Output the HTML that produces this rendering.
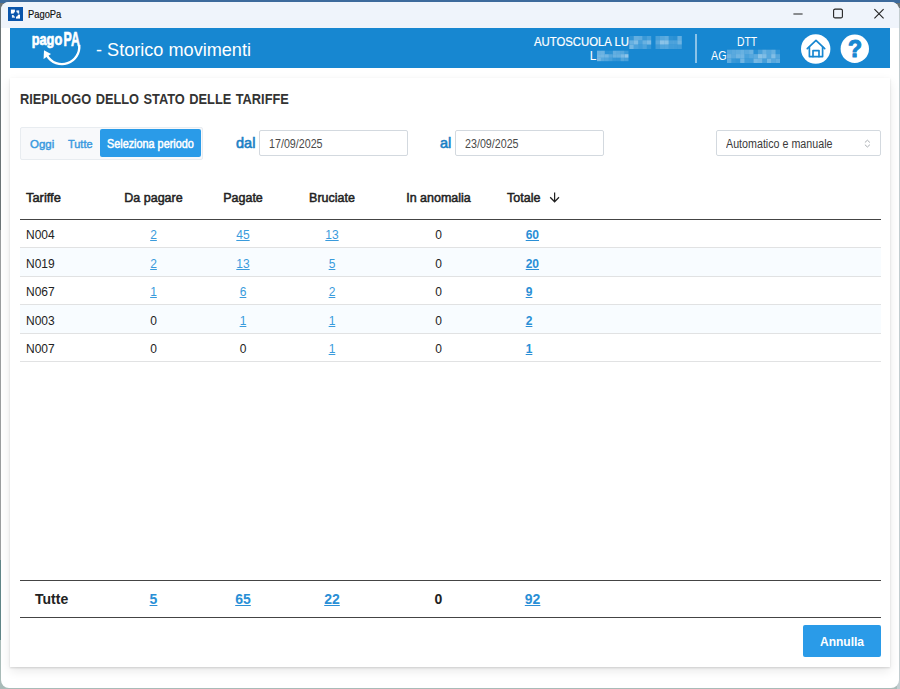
<!DOCTYPE html>
<html lang="it">
<head>
<meta charset="utf-8">
<title>PagoPa</title>
<style>
*{box-sizing:border-box;margin:0;padding:0}
html,body{width:900px;height:689px;overflow:hidden}
body{background:linear-gradient(180deg,#3c6a9c 0,#3c6a9c 3px,#6b7476 3px,#6b7476 230px,#9a9d9e 230px,#9a9d9e 560px,#5f8587 560px,#5f8587 640px,#a9bbb8 640px);font-family:"Liberation Sans",sans-serif;position:relative;color:#222}
.win{position:absolute;left:1px;top:1.5px;width:897.6px;height:686px;background:#fff;border-radius:8px;overflow:hidden}
.in{position:absolute;left:-1px;top:-1.5px;width:900px;height:689px}
.tbar{position:absolute;left:0;top:0;width:900px;height:28px;background:#eff4fb}
.abs{position:absolute;white-space:nowrap;transform-origin:0 50%}
.hdr{position:absolute;left:10px;top:28px;width:880px;height:40px;background:#1787d1;color:#fff}
.card{position:absolute;left:10px;top:78.3px;width:880px;height:588.4px;background:#fff;box-shadow:0 1px 2px rgba(0,0,0,.14),0 4px 10px rgba(0,0,0,.09)}
a{color:#3a9bdc;text-decoration:underline}
.h1{left:20px;top:91px;font-size:14px;font-weight:bold;color:#333;word-spacing:1px;transform:scaleX(.915)}
.tabs{left:20px;top:126.5px;width:183px;height:33px;border:1px solid #e8ecf0;border-radius:2px;background:#f8f9fb}
.tab{font-size:11.5px;color:#3a9ae0;top:137.5px;-webkit-text-stroke:.45px #3a9ae0}
.tabact{left:100px;top:129px;width:101px;height:28px;background:#2a9be8;border-radius:2px}
.lbl{font-size:14.5px;color:#1b7fc4;top:134.5px;-webkit-text-stroke:.6px #1b7fc4}
.inp{top:130px;height:26px;width:149px;border:1px solid #d3d9df;border-radius:2px;background:#fff;font-size:12px;color:#4a4a4a;padding:6px 0 0 9.2px}
.inp span,.sel span{display:inline-block;transform-origin:0 50%;transform:scaleX(.892)}
.sel{left:716px;top:130px;width:164.5px;height:26px;border:1px solid #d3d9df;border-radius:2px;background:#fff;font-size:12px;color:#3a3a3a;padding:6px 0 0 9px}
.th{font-size:12.5px;color:#222;top:190.5px;-webkit-text-stroke:.5px #222}
.c{transform:translateX(-50%)}
.hline{left:20px;width:861px;height:1px;background:#444}
.row{left:20px;width:861px;height:29px;border-bottom:1px solid #e1e2e3}
.row.alt{background:#f8fcff}
.td{font-size:12px;color:#222}
.tf{font-size:14px;font-weight:bold;color:#222;top:591px}
.tf a,.b a{font-weight:bold;color:#2a8fd6}
.btn{left:803px;top:625px;width:78px;height:32px;background:#2a9be8;border-radius:2px;color:#fff;font-size:12px;font-weight:bold;text-align:center;padding-top:10px}
</style>
</head>
<body>
<div style="position:absolute;left:897px;top:8px;width:3px;height:681px;background:#c3cdd0"></div>
<div class="win"><div class="in">
  <div class="tbar">
    <svg class="abs" style="left:8px;top:6.5px;width:15px;height:14.5px" viewBox="0 0 15 14.5"><rect width="15" height="14.5" fill="#0a55ab"/><rect x="2.9" y="2.6" width="4" height="4" fill="#fff"/><rect x="8.4" y="3.4" width="2.8" height="3.2" fill="#e8f2fb"/><rect x="3.9" y="8" width="3" height="2.7" fill="#e8f2fb"/><rect x="8" y="7.6" width="4" height="4" fill="#fff"/><circle cx="7.7" cy="7.4" r="2.3" fill="#0a55ab"/></svg>
    <div class="abs" id="t_win" style="left:27.8px;top:8px;font-size:11px;color:#111;-webkit-text-stroke:.2px #111;transform:scaleX(.85)">PagoPa</div>
    <svg class="abs" style="left:780px;top:0;width:120px;height:28px" viewBox="0 0 120 28"><g stroke="#222" stroke-width="1.1" fill="none"><path d="M13.4 14h9.2"/><rect x="53.6" y="9.1" width="8.8" height="8.8" rx="1.5"/><path d="M94.4 9.2l9.2 9.2M103.6 9.2l-9.2 9.2"/></g></svg>
  </div>
  <div class="hdr"></div>
  <div class="abs" id="t_title" style="left:95.7px;top:39.5px;font-size:17.5px;color:#fff;transform:scaleX(1.035)">- Storico movimenti</div>
  <div class="abs" id="t_a1" style="left:533.7px;top:35px;font-size:12px;color:#fff;-webkit-text-stroke:.2px #fff;transform:scaleX(.945)">AUTOSCUOLA LU</div>
  <div class="abs" id="t_a2" style="left:589.7px;top:49px;font-size:12px;color:#fff">L</div>
  <div class="abs" style="left:695.2px;top:33.6px;width:1.6px;height:29.3px;background:rgba(255,255,255,.5)"></div>
  <div class="abs" id="t_d1" style="left:736.5px;top:35px;font-size:12px;color:#fff;transform:scaleX(.86)">DTT</div>
  <div class="abs" id="t_d2" style="left:711px;top:49px;font-size:12px;color:#fff;transform:scaleX(.9)">AG</div>

  <svg class="abs" style="left:0;top:28px;width:900px;height:40px" viewBox="0 28 900 40"><rect x="629.3" y="36.0" width="4.4" height="4.3" fill="#fff" fill-opacity="0.11"/><rect x="633.7" y="36.0" width="4.4" height="4.3" fill="#fff" fill-opacity="0.33"/><rect x="638.0" y="36.0" width="4.4" height="4.3" fill="#fff" fill-opacity="0.30"/><rect x="642.4" y="36.0" width="4.4" height="4.3" fill="#fff" fill-opacity="0.15"/><rect x="646.8" y="36.0" width="4.4" height="4.3" fill="#fff" fill-opacity="0.22"/><rect x="655.5" y="36.0" width="4.4" height="4.3" fill="#fff" fill-opacity="0.21"/><rect x="659.9" y="36.0" width="4.4" height="4.3" fill="#fff" fill-opacity="0.27"/><rect x="664.3" y="36.0" width="4.4" height="4.3" fill="#fff" fill-opacity="0.31"/><rect x="668.7" y="36.0" width="4.4" height="4.3" fill="#fff" fill-opacity="0.10"/><rect x="673.0" y="36.0" width="4.4" height="4.3" fill="#fff" fill-opacity="0.08"/><rect x="677.4" y="36.0" width="4.4" height="4.3" fill="#fff" fill-opacity="0.32"/><rect x="629.3" y="40.3" width="4.4" height="4.3" fill="#fff" fill-opacity="0.35"/><rect x="633.7" y="40.3" width="4.4" height="4.3" fill="#fff" fill-opacity="0.45"/><rect x="638.0" y="40.3" width="4.4" height="4.3" fill="#fff" fill-opacity="0.22"/><rect x="642.4" y="40.3" width="4.4" height="4.3" fill="#fff" fill-opacity="0.35"/><rect x="646.8" y="40.3" width="4.4" height="4.3" fill="#fff" fill-opacity="0.43"/><rect x="655.5" y="40.3" width="4.4" height="4.3" fill="#fff" fill-opacity="0.29"/><rect x="659.9" y="40.3" width="4.4" height="4.3" fill="#fff" fill-opacity="0.50"/><rect x="664.3" y="40.3" width="4.4" height="4.3" fill="#fff" fill-opacity="0.49"/><rect x="668.7" y="40.3" width="4.4" height="4.3" fill="#fff" fill-opacity="0.23"/><rect x="673.0" y="40.3" width="4.4" height="4.3" fill="#fff" fill-opacity="0.23"/><rect x="677.4" y="40.3" width="4.4" height="4.3" fill="#fff" fill-opacity="0.38"/><rect x="629.3" y="44.7" width="4.4" height="4.3" fill="#fff" fill-opacity="0.40"/><rect x="633.7" y="44.7" width="4.4" height="4.3" fill="#fff" fill-opacity="0.23"/><rect x="638.0" y="44.7" width="4.4" height="4.3" fill="#fff" fill-opacity="0.18"/><rect x="642.4" y="44.7" width="4.4" height="4.3" fill="#fff" fill-opacity="0.24"/><rect x="646.8" y="44.7" width="4.4" height="4.3" fill="#fff" fill-opacity="0.12"/><rect x="655.5" y="44.7" width="4.4" height="4.3" fill="#fff" fill-opacity="0.18"/><rect x="659.9" y="44.7" width="4.4" height="4.3" fill="#fff" fill-opacity="0.25"/><rect x="664.3" y="44.7" width="4.4" height="4.3" fill="#fff" fill-opacity="0.26"/><rect x="668.7" y="44.7" width="4.4" height="4.3" fill="#fff" fill-opacity="0.19"/><rect x="673.0" y="44.7" width="4.4" height="4.3" fill="#fff" fill-opacity="0.18"/><rect x="677.4" y="44.7" width="4.4" height="4.3" fill="#fff" fill-opacity="0.18"/><rect x="597.0" y="50.7" width="3.9" height="3.5" fill="#fff" fill-opacity="0.36"/><rect x="600.9" y="50.7" width="3.9" height="3.5" fill="#fff" fill-opacity="0.36"/><rect x="604.9" y="50.7" width="3.9" height="3.5" fill="#fff" fill-opacity="0.09"/><rect x="608.8" y="50.7" width="3.9" height="3.5" fill="#fff" fill-opacity="0.10"/><rect x="612.8" y="50.7" width="3.9" height="3.5" fill="#fff" fill-opacity="0.32"/><rect x="616.7" y="50.7" width="3.9" height="3.5" fill="#fff" fill-opacity="0.29"/><rect x="620.6" y="50.7" width="3.9" height="3.5" fill="#fff" fill-opacity="0.27"/><rect x="624.6" y="50.7" width="3.9" height="3.5" fill="#fff" fill-opacity="0.16"/><rect x="597.0" y="54.2" width="3.9" height="3.5" fill="#fff" fill-opacity="0.40"/><rect x="600.9" y="54.2" width="3.9" height="3.5" fill="#fff" fill-opacity="0.40"/><rect x="604.9" y="54.2" width="3.9" height="3.5" fill="#fff" fill-opacity="0.39"/><rect x="608.8" y="54.2" width="3.9" height="3.5" fill="#fff" fill-opacity="0.27"/><rect x="612.8" y="54.2" width="3.9" height="3.5" fill="#fff" fill-opacity="0.35"/><rect x="616.7" y="54.2" width="3.9" height="3.5" fill="#fff" fill-opacity="0.34"/><rect x="620.6" y="54.2" width="3.9" height="3.5" fill="#fff" fill-opacity="0.43"/><rect x="624.6" y="54.2" width="3.9" height="3.5" fill="#fff" fill-opacity="0.52"/><rect x="597.0" y="57.7" width="3.9" height="3.5" fill="#fff" fill-opacity="0.40"/><rect x="600.9" y="57.7" width="3.9" height="3.5" fill="#fff" fill-opacity="0.28"/><rect x="604.9" y="57.7" width="3.9" height="3.5" fill="#fff" fill-opacity="0.25"/><rect x="608.8" y="57.7" width="3.9" height="3.5" fill="#fff" fill-opacity="0.20"/><rect x="612.8" y="57.7" width="3.9" height="3.5" fill="#fff" fill-opacity="0.13"/><rect x="616.7" y="57.7" width="3.9" height="3.5" fill="#fff" fill-opacity="0.12"/><rect x="620.6" y="57.7" width="3.9" height="3.5" fill="#fff" fill-opacity="0.25"/><rect x="624.6" y="57.7" width="3.9" height="3.5" fill="#fff" fill-opacity="0.21"/><rect x="727.0" y="49.7" width="4.4" height="4.4" fill="#fff" fill-opacity="0.26"/><rect x="731.4" y="49.7" width="4.4" height="4.4" fill="#fff" fill-opacity="0.29"/><rect x="735.8" y="49.7" width="4.4" height="4.4" fill="#fff" fill-opacity="0.31"/><rect x="740.2" y="49.7" width="4.4" height="4.4" fill="#fff" fill-opacity="0.35"/><rect x="744.7" y="49.7" width="4.4" height="4.4" fill="#fff" fill-opacity="0.29"/><rect x="749.1" y="49.7" width="4.4" height="4.4" fill="#fff" fill-opacity="0.35"/><rect x="753.5" y="49.7" width="4.4" height="4.4" fill="#fff" fill-opacity="0.08"/><rect x="757.9" y="49.7" width="4.4" height="4.4" fill="#fff" fill-opacity="0.21"/><rect x="762.3" y="49.7" width="4.4" height="4.4" fill="#fff" fill-opacity="0.35"/><rect x="766.8" y="49.7" width="4.4" height="4.4" fill="#fff" fill-opacity="0.27"/><rect x="771.2" y="49.7" width="4.4" height="4.4" fill="#fff" fill-opacity="0.34"/><rect x="775.6" y="49.7" width="4.4" height="4.4" fill="#fff" fill-opacity="0.11"/><rect x="727.0" y="54.1" width="4.4" height="4.4" fill="#fff" fill-opacity="0.36"/><rect x="731.4" y="54.1" width="4.4" height="4.4" fill="#fff" fill-opacity="0.29"/><rect x="735.8" y="54.1" width="4.4" height="4.4" fill="#fff" fill-opacity="0.38"/><rect x="740.2" y="54.1" width="4.4" height="4.4" fill="#fff" fill-opacity="0.39"/><rect x="744.7" y="54.1" width="4.4" height="4.4" fill="#fff" fill-opacity="0.22"/><rect x="749.1" y="54.1" width="4.4" height="4.4" fill="#fff" fill-opacity="0.28"/><rect x="753.5" y="54.1" width="4.4" height="4.4" fill="#fff" fill-opacity="0.30"/><rect x="757.9" y="54.1" width="4.4" height="4.4" fill="#fff" fill-opacity="0.49"/><rect x="762.3" y="54.1" width="4.4" height="4.4" fill="#fff" fill-opacity="0.45"/><rect x="766.8" y="54.1" width="4.4" height="4.4" fill="#fff" fill-opacity="0.27"/><rect x="771.2" y="54.1" width="4.4" height="4.4" fill="#fff" fill-opacity="0.46"/><rect x="775.6" y="54.1" width="4.4" height="4.4" fill="#fff" fill-opacity="0.26"/><rect x="727.0" y="58.6" width="4.4" height="4.4" fill="#fff" fill-opacity="0.30"/><rect x="731.4" y="58.6" width="4.4" height="4.4" fill="#fff" fill-opacity="0.15"/><rect x="735.8" y="58.6" width="4.4" height="4.4" fill="#fff" fill-opacity="0.12"/><rect x="740.2" y="58.6" width="4.4" height="4.4" fill="#fff" fill-opacity="0.38"/><rect x="744.7" y="58.6" width="4.4" height="4.4" fill="#fff" fill-opacity="0.18"/><rect x="749.1" y="58.6" width="4.4" height="4.4" fill="#fff" fill-opacity="0.18"/><rect x="753.5" y="58.6" width="4.4" height="4.4" fill="#fff" fill-opacity="0.41"/><rect x="757.9" y="58.6" width="4.4" height="4.4" fill="#fff" fill-opacity="0.38"/><rect x="762.3" y="58.6" width="4.4" height="4.4" fill="#fff" fill-opacity="0.20"/><rect x="766.8" y="58.6" width="4.4" height="4.4" fill="#fff" fill-opacity="0.40"/><rect x="771.2" y="58.6" width="4.4" height="4.4" fill="#fff" fill-opacity="0.28"/><rect x="775.6" y="58.6" width="4.4" height="4.4" fill="#fff" fill-opacity="0.32"/><g fill="#fff" stroke="#fff" stroke-width=".7" stroke-linejoin="round" font-family="Liberation Sans, sans-serif" font-weight="bold"><text x="31.7" y="44.6" font-size="16" textLength="30.5" lengthAdjust="spacingAndGlyphs">pago</text><text x="63.6" y="45.9" font-size="19.8" textLength="16.2" lengthAdjust="spacingAndGlyphs">PA</text></g><path d="M79.2 45 A17.3 17.3 0 0 1 47.2 55.8" fill="none" stroke="#fff" stroke-width="2.4"/><path d="M44 50.2 L51 54 L43.6 59 Z" fill="#fff"/><circle cx="815.7" cy="49" r="14.7" fill="#fff"/><g fill="none" stroke="#1787d1" stroke-width="1.7" stroke-linejoin="round" stroke-linecap="round"><path d="M807.3 48.6L816 40.3L824.7 48.6"/><path d="M809.4 47.2V56.6H822.6V47.2"/><path d="M813 56.6V50.6H819V56.6"/></g><circle cx="854.8" cy="48.8" r="14.2" fill="#fff"/><text x="855" y="56.9" font-size="23" font-weight="bold" font-family="Liberation Sans, sans-serif" fill="#1787d1" stroke="#1787d1" stroke-width="1.1" stroke-linejoin="round" text-anchor="middle">?</text></svg>
  <div class="card"></div>
  <div class="abs h1" id="t_h1">RIEPILOGO DELLO STATO DELLE TARIFFE</div>

  <div class="abs tabs"></div>
  <div class="abs tabact"></div>
  <div class="abs tab" id="t_oggi" style="left:30px">Oggi</div>
  <div class="abs tab" id="t_tutte" style="left:68px;transform:scaleX(.95)">Tutte</div>
  <div class="abs tab" id="t_sel" style="left:107.1px;top:137px;font-size:12px;color:#fff;-webkit-text-stroke:.5px #fff;transform:scaleX(.903)">Seleziona periodo</div>
  <div class="abs lbl" id="t_dal" style="left:236px">dal</div>
  <div class="abs inp" style="left:259px"><span>17/09/2025</span></div>
  <div class="abs lbl" id="t_al" style="left:440px">al</div>
  <div class="abs inp" style="left:455px"><span>23/09/2025</span></div>
  <div class="abs sel"><span>Automatico e manuale</span></div>
  <svg class="abs" style="left:862px;top:137px;width:12px;height:13px" viewBox="862 137 12 13"><path d="M864.9 142.5L867.4 140.2L869.9 142.5M864.9 144.7L867.4 147L869.9 144.7" fill="none" stroke="#a4a9ae" stroke-width=".95"/></svg>

  <div class="abs th" id="t_th0" style="left:25.8px;transform:scaleX(1.03)">Tariffe</div>
  <div class="abs th c" id="t_th1" style="left:153.5px">Da pagare</div>
  <div class="abs th c" id="t_th2" style="left:243px">Pagate</div>
  <div class="abs th c" id="t_th3" style="left:332px">Bruciate</div>
  <div class="abs th c" id="t_th4" style="left:438.5px">In anomalia</div>
  <div class="abs th" id="t_th5" style="left:507px">Totale</div>
  <svg class="abs" style="left:548px;top:190px;width:14px;height:14px" viewBox="548 190 14 14"><path d="M554.6 192.4V201.6M550.2 197.2L554.6 201.8L559 197.2" fill="none" stroke="#222" stroke-width="1.25"/></svg>
  <div class="abs hline" style="top:219px"></div>

  <div class="abs row" style="top:220px;height:28px"></div>
  <div class="abs row alt" style="top:248px"></div>
  <div class="abs row" style="top:277px;height:28px"></div>
  <div class="abs row alt" style="top:305px"></div>
  <div class="abs row" style="top:334px;height:28px"></div>

  <div class="abs td" style="left:26px;top:228px">N004</div>
  <div class="abs td c" style="left:153.5px;top:228px"><a>2</a></div>
  <div class="abs td c" style="left:243px;top:228px"><a>45</a></div>
  <div class="abs td c" style="left:332px;top:228px"><a>13</a></div>
  <div class="abs td c" style="left:438.5px;top:228px">0</div>
  <div class="abs td b" style="left:525.7px;top:228px"><a>60</a></div>
  <div class="abs td" style="left:26px;top:257px">N019</div>
  <div class="abs td c" style="left:153.5px;top:257px"><a>2</a></div>
  <div class="abs td c" style="left:243px;top:257px"><a>13</a></div>
  <div class="abs td c" style="left:332px;top:257px"><a>5</a></div>
  <div class="abs td c" style="left:438.5px;top:257px">0</div>
  <div class="abs td b" style="left:525.7px;top:257px"><a>20</a></div>
  <div class="abs td" style="left:26px;top:285px">N067</div>
  <div class="abs td c" style="left:153.5px;top:285px"><a>1</a></div>
  <div class="abs td c" style="left:243px;top:285px"><a>6</a></div>
  <div class="abs td c" style="left:332px;top:285px"><a>2</a></div>
  <div class="abs td c" style="left:438.5px;top:285px">0</div>
  <div class="abs td b" style="left:525.7px;top:285px"><a>9</a></div>
  <div class="abs td" style="left:26px;top:314px">N003</div>
  <div class="abs td c" style="left:153.5px;top:314px">0</div>
  <div class="abs td c" style="left:243px;top:314px"><a>1</a></div>
  <div class="abs td c" style="left:332px;top:314px"><a>1</a></div>
  <div class="abs td c" style="left:438.5px;top:314px">0</div>
  <div class="abs td b" style="left:525.7px;top:314px"><a>2</a></div>
  <div class="abs td" style="left:26px;top:342px">N007</div>
  <div class="abs td c" style="left:153.5px;top:342px">0</div>
  <div class="abs td c" style="left:243px;top:342px">0</div>
  <div class="abs td c" style="left:332px;top:342px"><a>1</a></div>
  <div class="abs td c" style="left:438.5px;top:342px">0</div>
  <div class="abs td b" style="left:525.7px;top:342px"><a>1</a></div>
  <div class="abs hline" style="top:580px"></div>
  <div class="abs hline" style="top:617px"></div>
  <div class="abs tf" id="t_tf0" style="left:35px">Tutte</div>
  <div class="abs tf c" style="left:153.5px"><a>5</a></div>
  <div class="abs tf c" style="left:243px"><a>65</a></div>
  <div class="abs tf c" style="left:332px"><a>22</a></div>
  <div class="abs tf c" style="left:438.5px">0</div>
  <div class="abs tf c" style="left:532.6px"><a>92</a></div>

  <div class="abs btn">Annulla</div>
</div></div>
</body>
</html>
